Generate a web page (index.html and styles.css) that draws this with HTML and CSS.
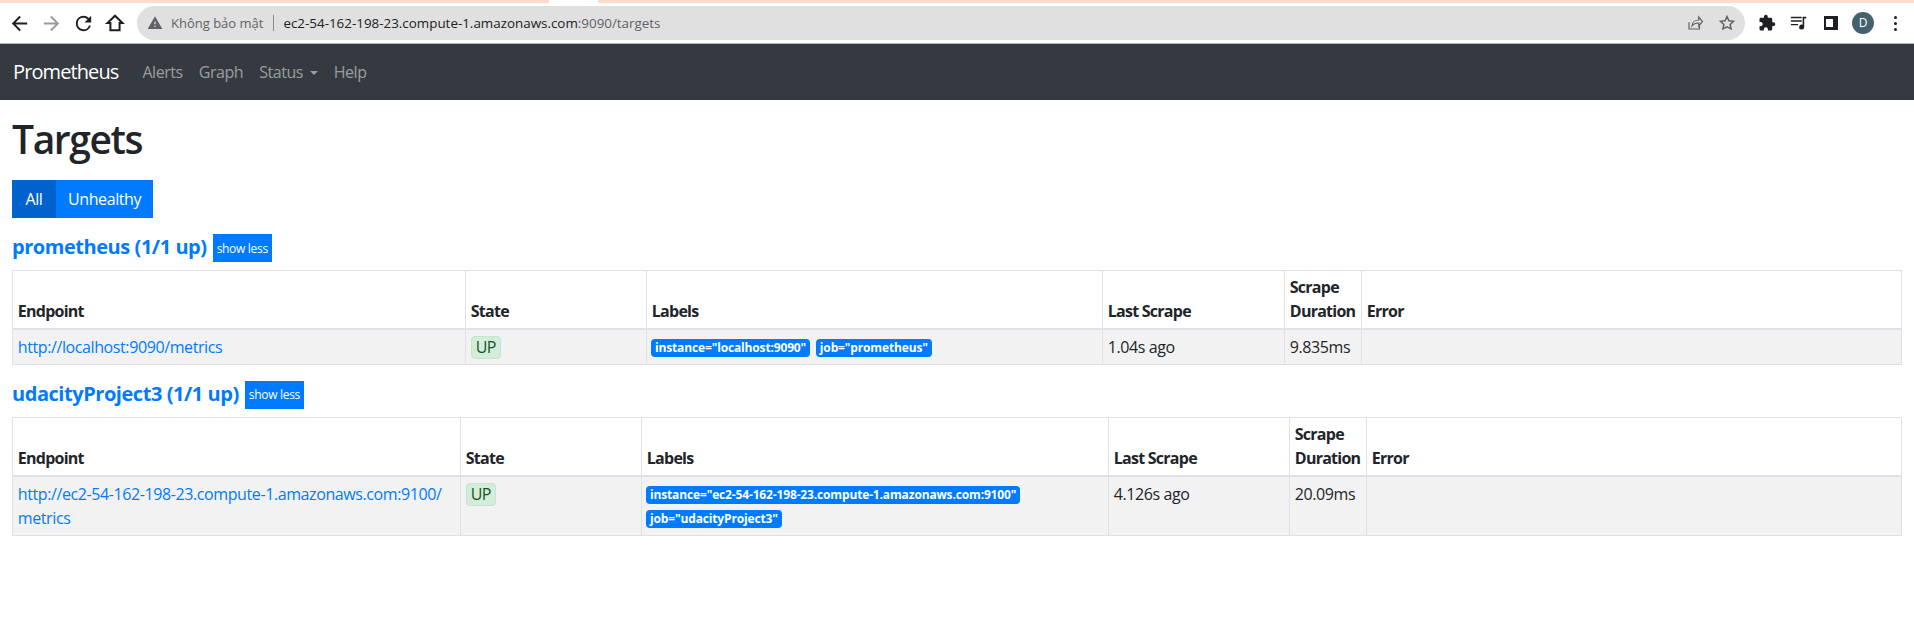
FILE: index.html
```html
<!DOCTYPE html>
<html lang="en">
<head>
    <meta charset="UTF-8">
    <meta name="viewport" content="width=device-width, initial-scale=1.0">
    <title>Prometheus Time Series Collection and Processing Server</title>
    <link rel="stylesheet" href="styles.css">
</head>
<body>
    <div class="tab-strip">
        <div class="tab-edge tab-edge-left"></div>
        <div class="tab-edge tab-edge-right"></div>
    </div>
    <div class="toolbar">
        <span class="tool"><svg viewBox="0 0 24 24" width="23" height="23"><path fill="#1f1f1f" d="M20 11H7.83l5.59-5.59L12 4l-8 8 8 8 1.41-1.41L7.83 13H20v-2z"/></svg></span>
        <span class="tool"><svg viewBox="0 0 24 24" width="23" height="23"><path fill="#9a9a9a" d="M4 11h12.17l-5.59-5.59L12 4l8 8-8 8-1.41-1.41L16.17 13H4v-2z"/></svg></span>
        <span class="tool"><svg viewBox="0 0 24 24" width="23" height="23"><path fill="#1f1f1f" d="M17.65 6.35A7.95 7.95 0 0 0 12 4a8 8 0 1 0 7.73 10h-2.08A6 6 0 1 1 12 6c1.66 0 3.14.69 4.22 1.78L13 11h7V4l-2.35 2.35z"/></svg></span>
        <span class="tool"><svg viewBox="0 0 24 24" width="22" height="22" fill="none" stroke="#1f1f1f" stroke-width="2.2"><path d="M12 4 3.8 12H7v8h10v-8h3.2z"/></svg></span>
        <div class="address">
            <svg class="warn" viewBox="0 0 24 24" width="16" height="16"><path fill="#5f6368" d="M1 21h22L12 2 1 21zm12-3h-2v-2h2v2zm0-4h-2v-4h2v4z"/></svg>
            <span class="not-secure">Không bảo mật</span>
            <span class="addr-sep"></span>
            <span class="url"><span class="host">ec2-54-162-198-23.compute-1.amazonaws.com</span>:9090/targets</span>
            <span class="addr-icons">
                <span class="tool"><svg viewBox="0 0 24 24" width="18" height="18" fill="none" stroke="#5f6368" stroke-width="1.6"><path d="M4 11v9h14v-4"/><path d="M8 16c0-5 4-8 9-8V4l5 6-5 6v-4c-4 0-7 1-9 4z"/></svg></span>
                <span class="tool"><svg viewBox="0 0 24 24" width="18" height="18" fill="none" stroke="#5f6368" stroke-width="2"><path d="M12 3.5l2.6 5.6 6.1.7-4.5 4.1 1.2 6L12 17l-5.4 2.9 1.2-6-4.5-4.1 6.1-.7z"/></svg></span>
            </span>
        </div>
        <div class="extensions">
            <span class="tool"><svg viewBox="0 0 24 24" width="18" height="18"><path fill="#1f2023" d="M20.5 11H19V7c0-1.1-.9-2-2-2h-4V3.5C13 2.12 11.88 1 10.5 1S8 2.12 8 3.5V5H4c-1.1 0-1.99.9-1.99 2v3.8H3.5c1.49 0 2.7 1.21 2.7 2.7s-1.21 2.7-2.7 2.7H2V20c0 1.1.9 2 2 2h3.8v-1.5c0-1.49 1.21-2.7 2.7-2.7 1.49 0 2.7 1.21 2.7 2.7V22H17c1.1 0 2-.9 2-2v-4h1.5c1.38 0 2.5-1.12 2.5-2.5S21.88 11 20.5 11z"/></svg></span>
            <span class="tool"><svg viewBox="0 0 20 20" width="18" height="18"><path fill="#1f2023" d="M1 3h12v1.6H1zM1 7h12v1.6H1zM1 11h8v1.6H1zM14 3h4v2h-2.2v9.5a2.8 2.8 0 1 1-1.8-2.6z"/></svg></span>
            <span class="tool"><span class="side-panel"></span></span>
            <span class="tool"><span class="avatar">D</span></span>
            <span class="tool"><span class="dots"><i></i><i></i><i></i></span></span>
        </div>
    </div>
    <div class="toolbar-line"></div>

    <nav class="navbar">
        <a class="brand" href="#">Prometheus</a>
        <a class="nav-link" href="#">Alerts</a>
        <a class="nav-link" href="#">Graph</a>
        <a class="nav-link" href="#">Status <span class="caret"></span></a>
        <a class="nav-link" href="#">Help</a>
    </nav>

    <main class="container">
        <h1>Targets</h1>
        <div class="btn-group">
            <button class="btn btn-active">All</button>
            <button class="btn">Unhealthy</button>
        </div>

        <section class="pool">
            <div class="pool-head">
                <a class="pool-title" href="#">prometheus (1/1 up)</a>
                <button class="btn-small">show less</button>
            </div>
            <table class="targets targets-first">
                <colgroup>
                    <col class="c-endpoint"><col class="c-state"><col class="c-labels"><col class="c-last"><col class="c-dur"><col>
                </colgroup>
                <thead>
                    <tr><th>Endpoint</th><th>State</th><th>Labels</th><th>Last Scrape</th><th>Scrape Duration</th><th>Error</th></tr>
                </thead>
                <tbody>
                    <tr>
                        <td><a href="#">http://localhost:9090/metrics</a></td>
                        <td><span class="up">UP</span></td>
                        <td class="labels"><span class="label">instance="localhost:9090"</span> <span class="label">job="prometheus"</span></td>
                        <td>1.04s ago</td>
                        <td>9.835ms</td>
                        <td></td>
                    </tr>
                </tbody>
            </table>
        </section>

        <section class="pool">
            <div class="pool-head">
                <a class="pool-title" href="#">udacityProject3 (1/1 up)</a>
                <button class="btn-small">show less</button>
            </div>
            <table class="targets targets-second">
                <colgroup>
                    <col class="c-endpoint"><col class="c-state"><col class="c-labels"><col class="c-last"><col class="c-dur"><col>
                </colgroup>
                <thead>
                    <tr><th>Endpoint</th><th>State</th><th>Labels</th><th>Last Scrape</th><th>Scrape Duration</th><th>Error</th></tr>
                </thead>
                <tbody>
                    <tr>
                        <td><a href="#">http://ec2-54-162-198-23.compute-1.amazonaws.com:9100/<wbr>metrics</a></td>
                        <td><span class="up">UP</span></td>
                        <td class="labels"><span class="label">instance="ec2-54-162-198-23.compute-1.amazonaws.com:9100"</span> <span class="label">job="udacityProject3"</span></td>
                        <td>4.126s ago</td>
                        <td>20.09ms</td>
                        <td></td>
                    </tr>
                </tbody>
            </table>
        </section>
    </main>
</body>
</html>
```
FILE: styles.css
```css
/* Base */
body {
    margin: 0;
    font-family: "Open Sans", "Noto Sans", sans-serif;
    font-size: 16px;
    letter-spacing: -0.4px;
    line-height: 24px;
    color: #212529;
    background-color: #fff;
}

/* Browser chrome */
.tab-strip {
    display: flex;
    justify-content: space-between;
    height: 3px;
}

.tab-edge {
    background-color: #fcdccb;
}

.tab-edge-left {
    width: 549px;
}

.tab-edge-right {
    width: 1316px;
}

.toolbar {
    display: flex;
    align-items: center;
    height: 40px;
    padding-left: 3px;
}

.toolbar-line {
    height: 1px;
    background-color: #b4b4b4;
}

.tool {
    display: flex;
    align-items: center;
    justify-content: center;
    width: 32px;
    height: 32px;
    flex: none;
}

.address {
    display: flex;
    align-items: center;
    width: 1608px;
    height: 34px;
    margin-left: 6px;
    padding-left: 10px;
    box-sizing: border-box;
    border-radius: 17px;
    background-color: #e0e0e0;
    font-size: 13px;
    letter-spacing: 0;
    color: #5f6368;
    white-space: nowrap;
}

.not-secure {
    margin-left: 8px;
}

.addr-sep {
    width: 1px;
    height: 16px;
    margin: 0 9px 0 10px;
    background-color: #8a8a8a;
}

.url {
    font-size: 13.4px;
}

.url .host {
    color: #202124;
}

.addr-icons {
    display: flex;
    margin-left: auto;
    margin-right: 2px;
}

.extensions {
    display: flex;
    margin-left: 6px;
}

.side-panel {
    width: 7px;
    height: 8px;
    border: 3px solid #1f2023;
    border-left-width: 2px;
    border-right-width: 5px;
}

.avatar {
    width: 22px;
    height: 22px;
    border-radius: 50%;
    background-color: #45606e;
    color: #fff;
    font-size: 12px;
    letter-spacing: 0;
    line-height: 22px;
    text-align: center;
}

.dots {
    display: flex;
    flex-direction: column;
    gap: 3px;
}

.dots i {
    width: 3px;
    height: 3px;
    border-radius: 50%;
    background-color: #1f2023;
}

/* Navbar */
.navbar {
    display: flex;
    align-items: center;
    gap: 16px;
    height: 56px;
    padding-left: 13px;
    background-color: #343a40;
}

.navbar a {
    text-decoration: none;
}

.brand {
    margin-right: 8px;
    font-size: 20px;
    letter-spacing: -0.9px;
    color: #fff;
}

.nav-link {
    color: rgba(255, 255, 255, 0.5);
    letter-spacing: -0.45px;
}

.caret {
    display: inline-block;
    margin-left: 3px;
    vertical-align: 3px;
    border-top: 4.8px solid;
    border-left: 4.8px solid transparent;
    border-right: 4.8px solid transparent;
}

/* Page */
.container {
    padding: 15px 12px 0;
}

h1 {
    margin: 0 0 17px;
    font-size: 39px;
    font-weight: 600;
    letter-spacing: -1.4px;
    line-height: 48px;
}

.btn-group {
    display: flex;
}

.btn {
    height: 38px;
    padding: 0 12px;
    border: none;
    background-color: #007bff;
    color: #fff;
    font-family: inherit;
    font-size: 16px;
    letter-spacing: -0.4px;
}

.btn-active {
    padding: 0 13.5px;
    background-color: #0062cc;
}

.pool {
    margin-top: 16px;
}

.pool-head {
    display: flex;
    align-items: center;
    gap: 6px;
    margin-bottom: 8px;
}

.pool-title {
    padding-bottom: 2px;
    font-size: 20px;
    font-weight: 700;
    letter-spacing: -0.45px;
    color: #007bff;
    text-decoration: none;
}

.btn-small {
    height: 28px;
    padding: 0 4px;
    border: none;
    background-color: #007bff;
    color: #fff;
    font-family: inherit;
    font-size: 12px;
    letter-spacing: -0.3px;
}

/* Targets tables */
.targets {
    width: 1890px;
    table-layout: fixed;
    border-collapse: collapse;
}

.targets th,
.targets td {
    padding: 4.8px;
    border: 1px solid #dee2e6;
    text-align: left;
    vertical-align: top;
}

.targets td {
    padding-top: 5.4px;
    padding-bottom: 4.8px;
}

.targets td.labels {
    padding-left: 4px;
}

.targets th {
    vertical-align: bottom;
    padding-top: 4px;
    border-bottom-width: 2px;
    font-weight: 700;
    letter-spacing: -0.75px;
}

.targets tbody tr {
    background-color: #f2f2f2;
}

.targets a {
    color: #007bff;
    text-decoration: none;
}

.targets-first .c-endpoint { width: 453px; }
.targets-first .c-labels { width: 456px; }
.targets-second .c-endpoint { width: 448px; }
.targets-second .c-labels { width: 467px; }
.c-state { width: 181px; }
.targets-first .c-last { width: 182px; }
.targets-second .c-last { width: 181px; }
.c-dur { width: 77px; }

.up {
    display: inline-block;
    padding: 0 4px;
    border: 1px solid #c3e6cb;
    border-radius: 4px;
    background-color: #d4edda;
    color: #155724;
    font-size: 16px;
    letter-spacing: -0.6px;
    line-height: 21px;
}

.label {
    display: inline-block;
    margin-right: 2px;
    padding: 0 4px;
    border-radius: 4px;
    background-color: #007bff;
    color: #fff;
    font-size: 12px;
    font-weight: 700;
    letter-spacing: -0.15px;
    line-height: 18px;
    vertical-align: 1px;
}
```
